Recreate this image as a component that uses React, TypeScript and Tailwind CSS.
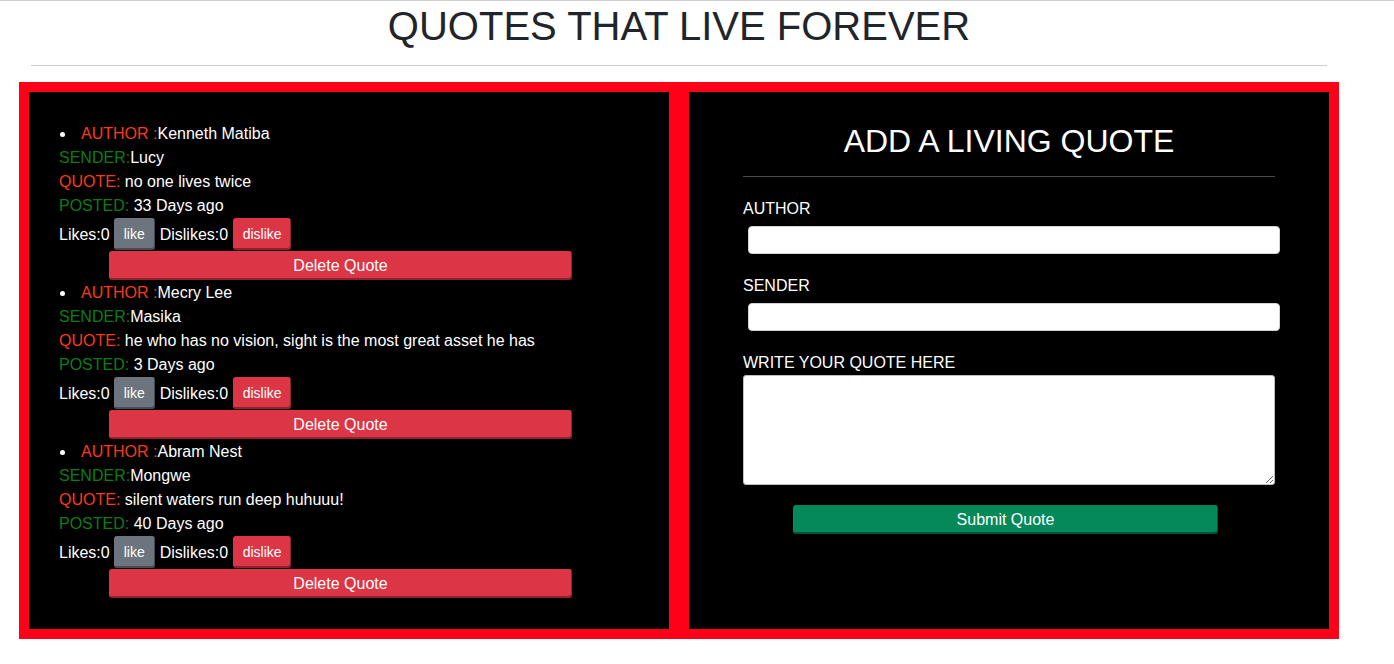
import React from 'react'

const QUOTES = [
  { author: 'Kenneth Matiba', sender: 'Lucy', quote: 'no one lives twice', posted: '33 Days ago' },
  { author: 'Mecry Lee', sender: 'Masika', quote: 'he who has no vision, sight is the most great asset he has', posted: '3 Days ago' },
  { author: 'Abram Nest', sender: 'Mongwe', quote: 'silent waters run deep huhuuu!', posted: '40 Days ago' },
]

function QuoteItem({ author, sender, quote, posted }: (typeof QUOTES)[number]) {
  return (
    <li className="text-[16px] leading-[24px]">
      <div className="flex items-center">
        <span className="w-[22px] flex items-center">
          <span className="ml-[1px] w-[5px] h-[5px] rounded-full bg-white" />
        </span>
        <span className="text-[#f83a1a]">AUTHOR :</span>
        <span>{author}</span>
      </div>
      <div>
        <span className="text-[#0a7d16]">SENDER:</span>
        {sender}
      </div>
      <div>
        <span className="text-[#f83a1a]">QUOTE:</span> {quote}
      </div>
      <div>
        <span className="text-[#0a7d16]">POSTED:</span> {posted}
      </div>
      <div className="flex items-center h-[34px]">
        <span>Likes:0</span>
        <button className="self-start ml-[4px] w-[41px] h-[32px] rounded-[3px] bg-[#6c757d] text-[14px] text-white shadow-[inset_-1px_-2px_0_rgba(0,0,0,0.35)]">
          like
        </button>
        <span className="ml-[5px]">Dislikes:0</span>
        <button className="self-start ml-[5px] w-[58px] h-[32px] rounded-[3px] bg-[#dc3545] text-[14px] text-white shadow-[inset_-1px_-2px_0_rgba(0,0,0,0.35)]">
          dislike
        </button>
      </div>
      <button className="block -mt-[1px] mb-[1px] ml-[50px] w-[463px] h-[29px] rounded-[3px] bg-[#dc3545] text-[16px] text-white shadow-[inset_-1px_-2px_0_rgba(0,0,0,0.35)]">
        Delete Quote
      </button>
    </li>
  )
}

export default function App() {
  return (
    <div className="min-h-[664px] bg-white border-t border-[#cfcfcf] font-['Liberation_Sans',Arial,sans-serif]">
      <div className="ml-[19px] w-[1320px]">
        <div className="px-[12px] pt-[1px]">
          <h1 className="h-[48px] text-center text-[40px] leading-[48px] text-[#212529]">
            QUOTES THAT LIVE FOREVER
          </h1>
          <hr className="mt-[15px] border-t border-[#cfcfcf]" />
        </div>

        <div className="mt-[16px] flex gap-[20px] bg-[#ff0019] p-[10px]">
          <div className="w-[640px] h-[537px] bg-black px-[30px] pt-[30px] text-white">
            <ul>
              {QUOTES.map((q) => (
                <QuoteItem key={q.author} {...q} />
              ))}
            </ul>
          </div>

          <div className="w-[640px] h-[537px] bg-black px-[54px] pt-[30px] text-white">
            <h2 className="text-center text-[32px] leading-[38px]">ADD A LIVING QUOTE</h2>
            <hr className="mt-[16px] border-t border-[#4a4a4a]" />

            <label className="block mt-[20px] text-[16px] leading-[24px]">AUTHOR</label>
            <input className="block mt-[5px] ml-[5px] w-[532px] h-[28px] rounded-[4px] border border-[#ced4da] bg-white" />

            <label className="block mt-[20px] text-[16px] leading-[24px]">SENDER</label>
            <input className="block mt-[5px] ml-[5px] w-[532px] h-[28px] rounded-[4px] border border-[#ced4da] bg-white" />

            <label className="block mt-[20px] text-[16px] leading-[24px]">WRITE YOUR QUOTE HERE</label>
            <textarea className="block w-[532px] h-[110px] rounded-[3px] border border-[#bfbfbf] bg-white" />

            <button className="block mt-[20px] ml-[50px] w-[425px] h-[29px] rounded-[3px] bg-[#05885a] text-[16px] text-white shadow-[inset_-1px_-2px_0_rgba(0,0,0,0.4)]">
              Submit Quote
            </button>
          </div>
        </div>
      </div>
    </div>
  )
}
